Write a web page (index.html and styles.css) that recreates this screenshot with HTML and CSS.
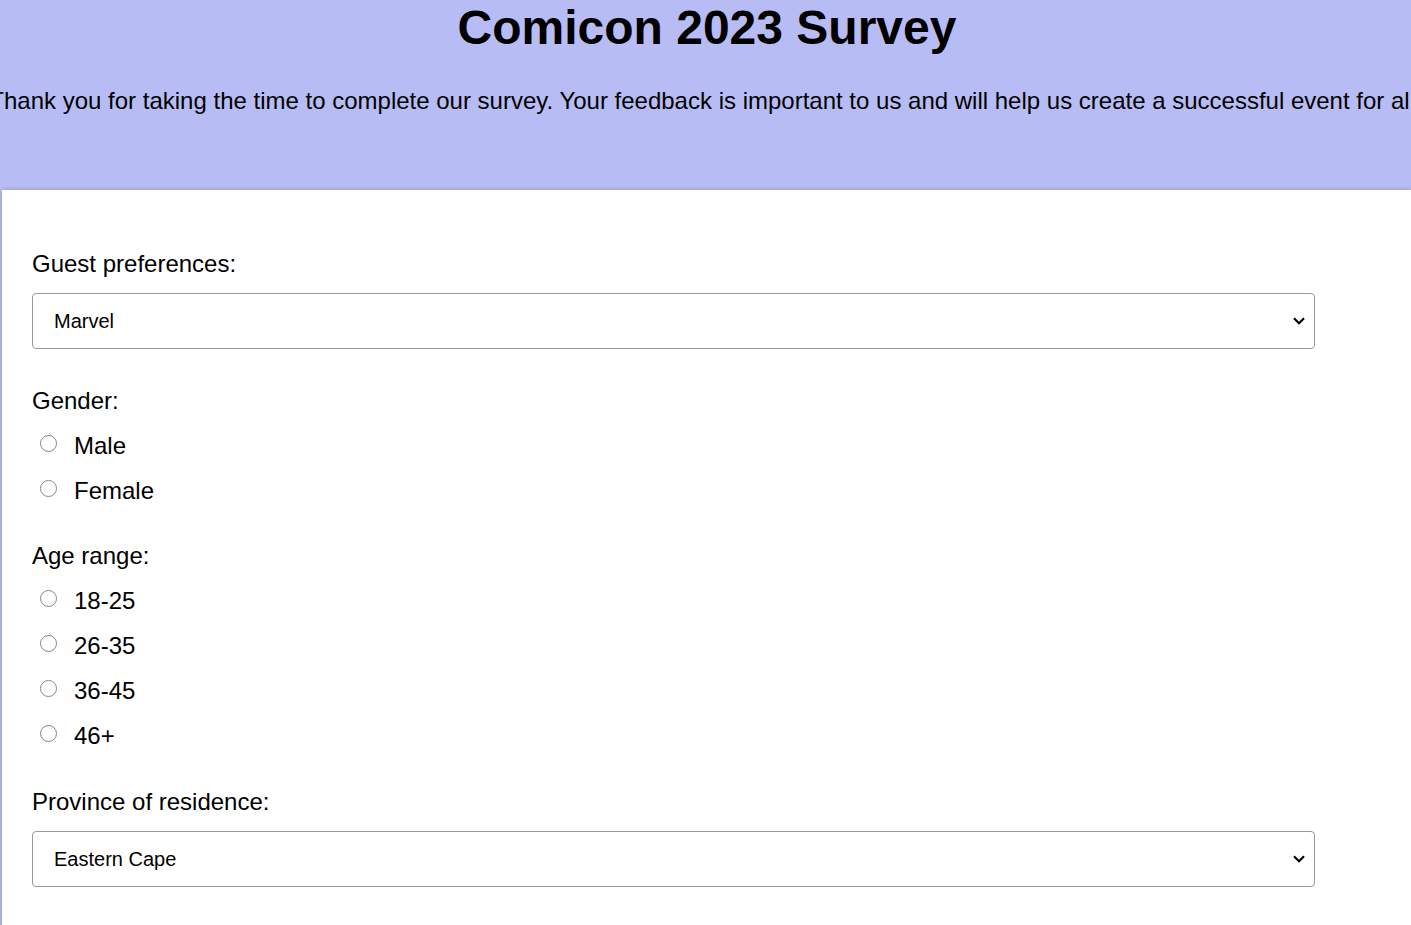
FILE: index.html
```html
<!DOCTYPE html>
<html lang="en">
<head>
<meta charset="utf-8">
<title>Comicon 2023 Survey</title>
<link rel="stylesheet" href="styles.css">
</head>
<body>
<header class="header">
  <h1 class="title">Comicon 2023 Survey</h1>
  <p class="intro"><span>Thank you for taking the time to complete our survey. Your feedback is important to us and will help us create a successful event for all.</span></p>
</header>
<form class="survey">
  <div class="field">
    <label class="field-label" for="guest">Guest preferences:</label>
    <select class="select" id="guest">
      <option>Marvel</option>
      <option>DC</option>
      <option>Anime</option>
    </select>
  </div>
  <div class="field field-tight">
    <div class="field-label">Gender:</div>
    <label class="option"><input type="radio" name="gender" class="radio"><span>Male</span></label>
    <label class="option"><input type="radio" name="gender" class="radio"><span>Female</span></label>
  </div>
  <div class="field">
    <div class="field-label">Age range:</div>
    <label class="option"><input type="radio" name="age" class="radio"><span>18-25</span></label>
    <label class="option"><input type="radio" name="age" class="radio"><span>26-35</span></label>
    <label class="option"><input type="radio" name="age" class="radio"><span>36-45</span></label>
    <label class="option"><input type="radio" name="age" class="radio"><span>46+</span></label>
  </div>
  <div class="field">
    <label class="field-label" for="province">Province of residence:</label>
    <select class="select" id="province">
      <option>Eastern Cape</option>
      <option>Western Cape</option>
      <option>Gauteng</option>
    </select>
  </div>
</form>
</body>
</html>
```
FILE: styles.css
```css
html, body {
  margin: 0;
  padding: 0;
}
body {
  background: #b7bdf4;
  font-family: "Liberation Sans", Arial, sans-serif;
  color: #000;
  overflow: hidden;
}
.header {
  height: 190px;
  box-sizing: border-box;
  padding: 0 0 0 3px;
}
.title {
  margin: 0;
  font-size: 48px;
  font-weight: bold;
  text-align: center;
}
.intro {
  margin: 32px 0 0 -3px;
  font-size: 24px;
  line-height: 28px;
  display: flex;
  justify-content: center;
  white-space: nowrap;
}
.survey {
  margin-left: 2px;
  background: #fff;
  box-shadow: 0 0 4px rgba(60, 60, 120, 0.35);
  padding: 60px 96px 40px 30px;
  min-height: 800px;
}
.field {
  display: flex;
  flex-direction: column;
  margin-bottom: 38px;
}
.field-tight {
  margin-bottom: 37px;
}
.field-label {
  font-size: 24px;
  line-height: 28px;
  margin-bottom: 15px;
}
.select {
  -webkit-appearance: none;
  appearance: none;
  width: 100%;
  height: 56px;
  font-family: "Liberation Sans", Arial, sans-serif;
  font-size: 20px;
  color: #000;
  background-color: #fff;
  background-image: url("data:image/svg+xml;utf8,<svg xmlns='http://www.w3.org/2000/svg' width='12' height='8' viewBox='0 0 12 8'><path d='M1 1.3 L6 6.3 L11 1.3' fill='none' stroke='black' stroke-width='2.2'/></svg>");
  background-repeat: no-repeat;
  background-position: right 9px center;
  border: 1px solid #999;
  border-radius: 4px;
  padding: 0 30px 0 21px;
}
.option {
  display: flex;
  align-items: center;
  font-size: 24px;
  line-height: 28px;
  margin-top: 2px;
  margin-bottom: 15px;
}
.option:last-child {
  margin-bottom: 0;
}
.radio {
  -webkit-appearance: none;
  appearance: none;
  box-sizing: border-box;
  width: 17px;
  height: 17px;
  border: 1.6px solid #858585;
  border-radius: 50%;
  background: #fff;
  margin: 0 17px 5px 8px;
  flex: none;
}
```
